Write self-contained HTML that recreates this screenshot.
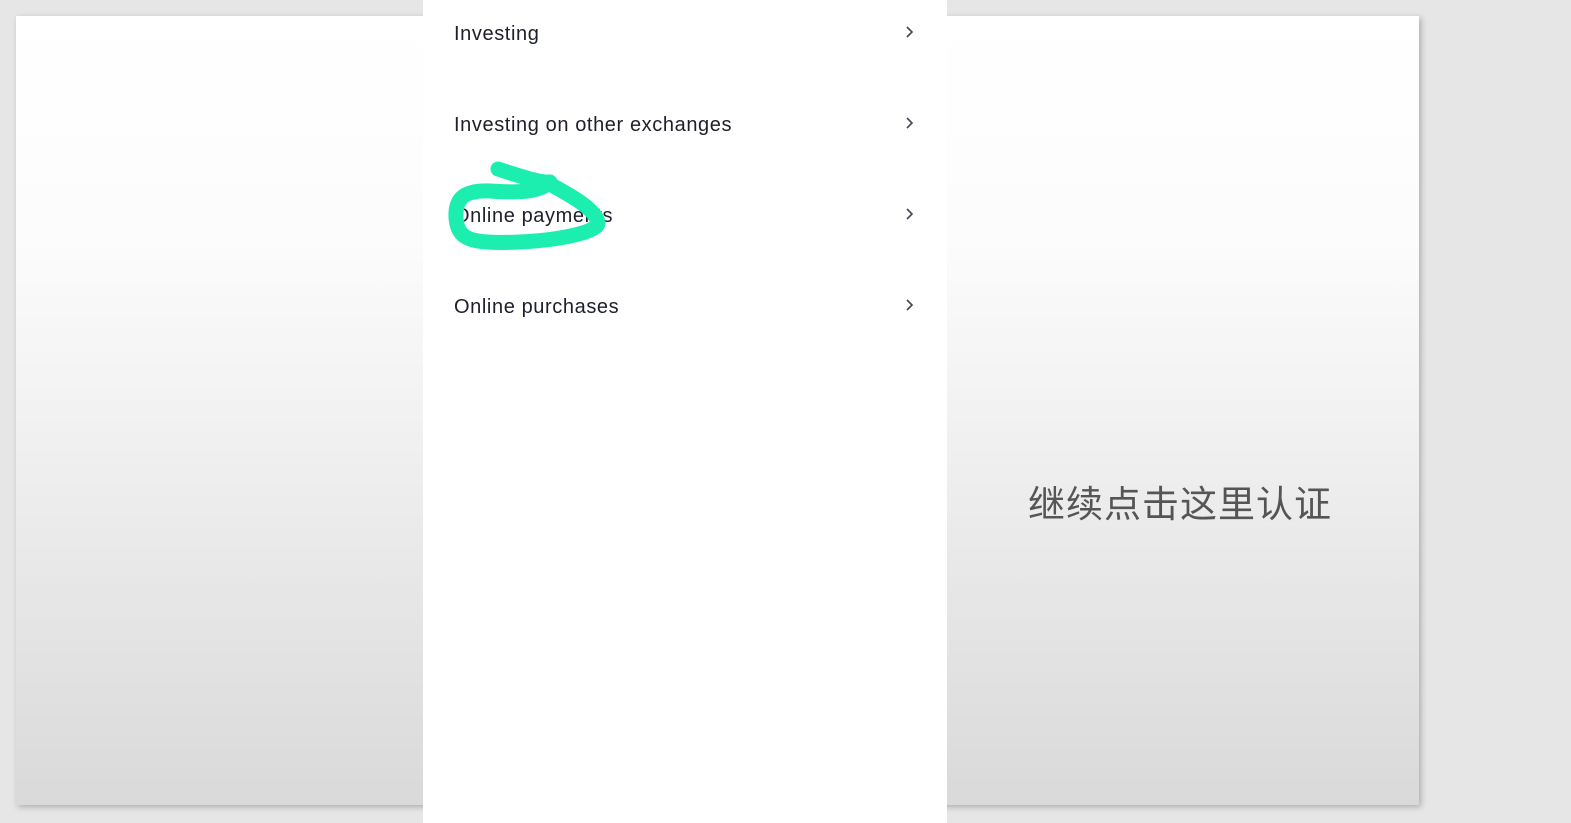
<!DOCTYPE html>
<html><head><style>
body{margin:0;width:1571px;height:823px;background:#e6e6e6;position:relative;overflow:hidden;font-family:"Liberation Sans",sans-serif}
.slide{position:absolute;left:16px;top:16px;width:1403px;height:789px;background:linear-gradient(#fff 0%,#fcfcfc 28%,#f2f2f2 50%,#d9d9d9 100%);box-shadow:2px 2px 6px rgba(0,0,0,.25)}
.panel{position:absolute;left:423px;top:0;width:524px;height:823px;background:#fff}
.row{position:absolute;left:454px;font-size:20px;color:#1d1f2b;line-height:24px;letter-spacing:0.6px}
.chev{position:absolute;left:904px}
.cn{position:absolute;left:1028px;top:474px;font-size:37px;color:#555;font-family:"Liberation Sans","Noto Sans CJK SC",sans-serif;letter-spacing:1px}
</style></head><body>
<div class="slide"></div>
<div class="panel"></div>
<div class="row" style="top:22px">Investing</div>
<div class="row" style="top:113px">Investing on other exchanges</div>
<div class="row" style="top:204px">Online payments</div>
<div class="row" style="top:295px">Online purchases</div>
<svg class="chev" style="top:25px" width="12" height="14"><path d="M3 2l5 5-5 5" fill="none" stroke="#445" stroke-width="1.6"/></svg>
<svg class="chev" style="top:116px" width="12" height="14"><path d="M3 2l5 5-5 5" fill="none" stroke="#445" stroke-width="1.6"/></svg>
<svg class="chev" style="top:207px" width="12" height="14"><path d="M3 2l5 5-5 5" fill="none" stroke="#445" stroke-width="1.6"/></svg>
<svg class="chev" style="top:298px" width="12" height="14"><path d="M3 2l5 5-5 5" fill="none" stroke="#445" stroke-width="1.6"/></svg>
<svg style="position:absolute;left:0;top:0" width="1571" height="823"><path d="M498 169 C520 176 540 183 550 182 C540 192 520 193 490 191 C462 190 455 200 456 218 C458 240 470 244 520 242 C560 240 600 232 598 222 C594 208 570 195 548 183" fill="none" stroke="#1ceeb0" stroke-width="15" stroke-linecap="round" stroke-linejoin="round"/></svg>
<div class="cn">继续点击这里认证</div>
</body></html>
